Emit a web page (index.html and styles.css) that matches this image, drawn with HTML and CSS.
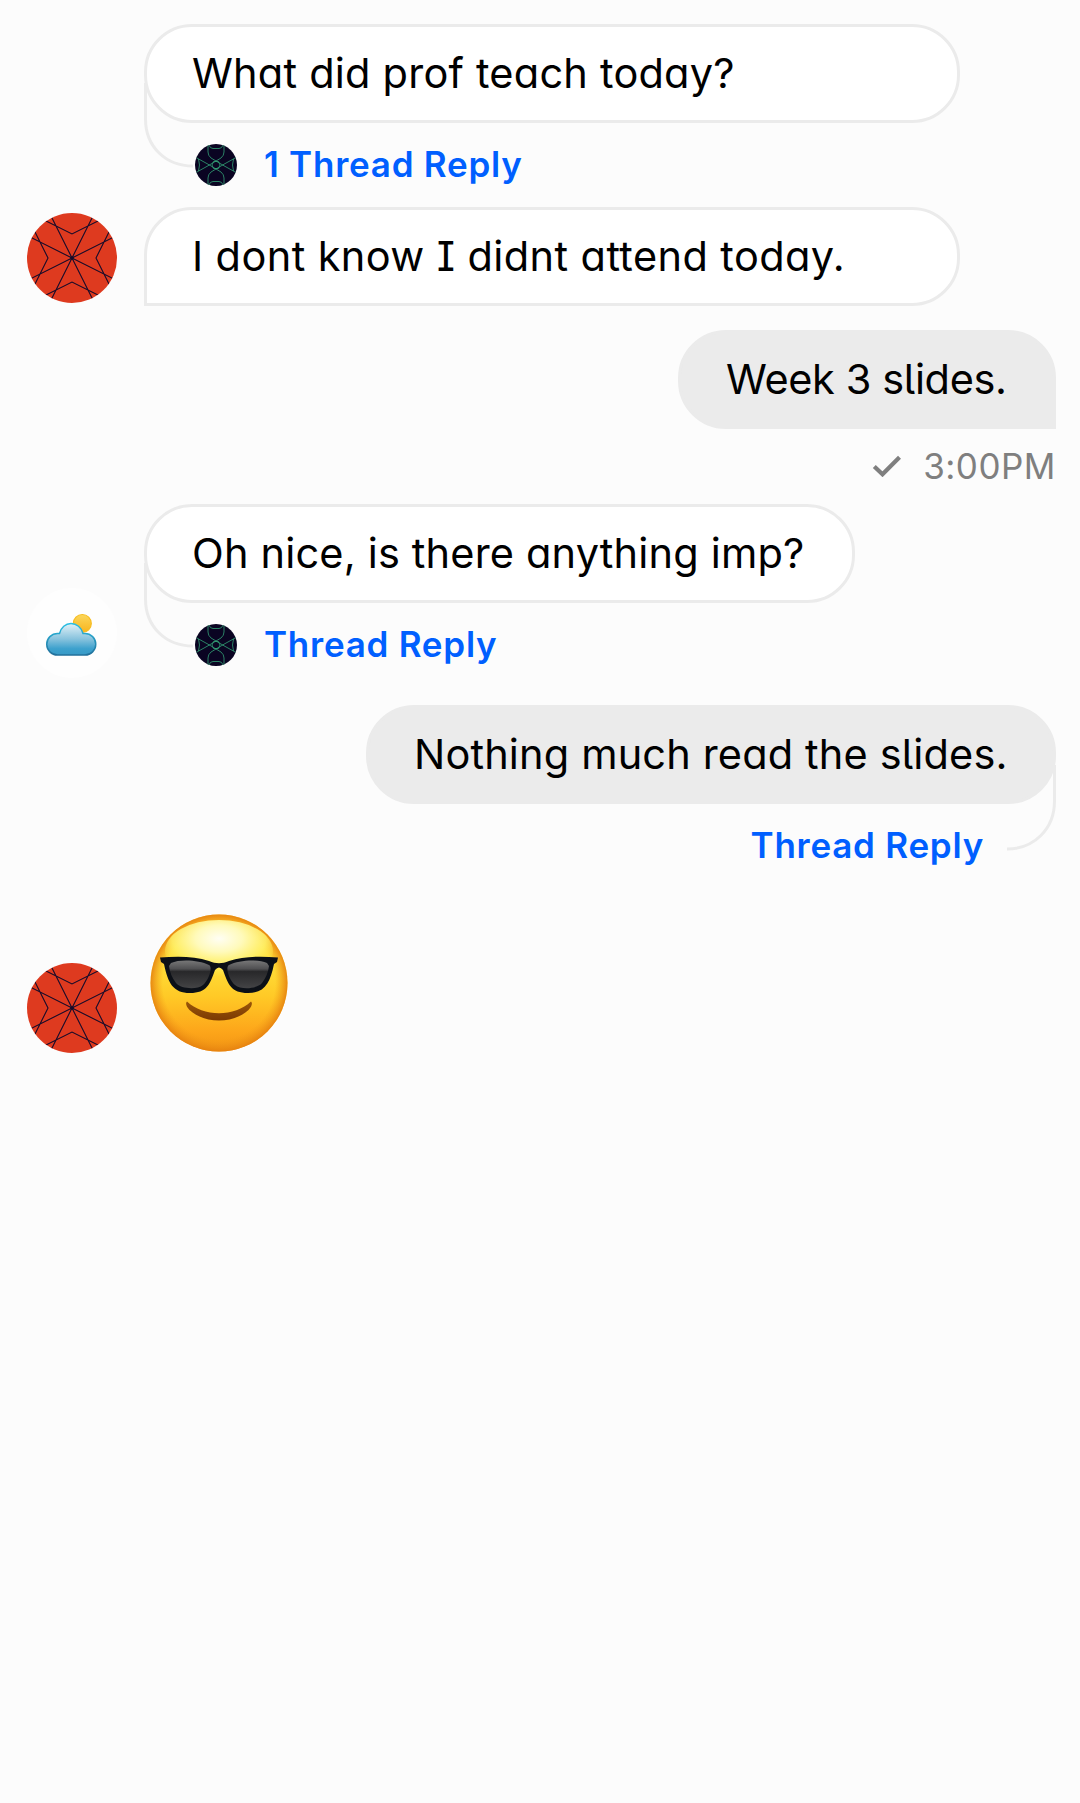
FILE: index.html
```html
<!DOCTYPE html>
<html lang="en">
<head>
<meta charset="utf-8">
<title>Chat</title>
<link rel="stylesheet" href="styles.css">
</head>
<body>
<svg class="defs" width="0" height="0" aria-hidden="true">
  <defs>
    <clipPath id="round90"><circle cx="45" cy="45" r="45"/></clipPath>
    <clipPath id="round42"><circle cx="21" cy="21" r="21"/></clipPath>
    <linearGradient id="cloud" x1="0" y1="0" x2="0" y2="1"><stop offset="0" stop-color="#e3f2f8"/><stop offset=".5" stop-color="#86c2dd"/><stop offset=".8" stop-color="#3da1cd"/><stop offset="1" stop-color="#3799c6"/></linearGradient>
    <linearGradient id="cloudEdge" x1="0" y1="0" x2="0" y2="1"><stop offset="0" stop-color="#2bc0e4"/><stop offset="1" stop-color="#22709b"/></linearGradient>
    <linearGradient id="sun" x1="0" y1="0" x2="0" y2="1"><stop offset="0" stop-color="#fbd75c"/><stop offset="1" stop-color="#f9b41c"/></linearGradient>
    <symbol id="avatar-red" viewBox="0 0 90 90">
      <g clip-path="url(#round90)">
        <rect width="90" height="90" fill="#de3a1f"/>
        <path d="M22.5 0L67.500 90M67.500 0L22.500 90M0 22.500L90 67.500M0 67.500L90 22.500M0-1.500L45 21L90-1.500M0 91.500L45 69L90 91.500M-1.500 0L21 45L-1.500 90M91.500 0L69 45L91.500 90" fill="none" stroke="#160b2a" stroke-width="1.100"/>
        <circle cx="45" cy="45" r="1.800" fill="#160b2a"/>
      </g>
    </symbol>
    <symbol id="avatar-dark" viewBox="0 0 42 42">
      <g clip-path="url(#round42)">
        <rect width="42" height="42" fill="#0a0422"/>
        <path d="M13 0V8Q13 11.500 16 14L29 21.800L41 28.500M29 0V8Q29 11.500 26 14L13 21.800L1 28.500M13 42V34Q13 30.500 16 28L29 20.200L41 13.500M29 42V34Q29 30.500 26 28L13 20.200L1 13.500M14 1Q15 4.500 18 4.500H24Q27 4.500 28 1M14 41Q15 37.500 18 37.500H24Q27 37.500 28 41M3.500 15Q5.500 21 3.500 27M38.500 15Q36.500 21 38.500 27M18.500 17.500H23.500L25 21L23.500 24.500H18.500L17 21Z" fill="none" stroke="#34a176" stroke-width=".8"/>
      </g>
    </symbol>
  </defs>
</svg>
<main class="chat">
  <section class="message received first">
    <div class="bubble wide"><span class="t1">What did prof teach today?</span></div>
    <div class="thread"><svg class="mini"><use href="#avatar-dark"/></svg><span class="reply count">1 Thread Reply</span></div>
    <svg class="link link-left" viewBox="0 0 50 86"><path d="M1.500 0V36C1.500 64 22 83 49 83" /></svg>
  </section>
  <section class="message received second">
    <svg class="avatar"><use href="#avatar-red"/></svg>
    <div class="bubble wide tail"><span class="t2">I dont know <span class="serif-i">I</span> didnt attend today.</span></div>
  </section>
  <section class="message sent third">
    <div class="bubble tail short"><span class="t3">Week 3 slides.</span></div>
    <div class="status"><svg class="check" viewBox="0 0 30 22"><path d="M2.300 11.500L10.500 19.300L27.500 2.300"/></svg><time>3:00PM</time></div>
  </section>
  <section class="message received fourth">
    <svg class="avatar" viewBox="0 0 90 90">
      <circle cx="45" cy="45" r="45" fill="#fefefe"/>
      <circle cx="55.300" cy="35.500" r="9" fill="url(#sun)" stroke="#f7bd20" stroke-width="1.200"/>
      <path d="M30.500 67A10.750 10.750 0 0 1 30.500 45.500H32.500C34 39.500 38.500 35.500 44 35.500S54.500 39.500 56 45.500H58A10.750 10.750 0 0 1 58 67Z" fill="url(#cloud)" stroke="url(#cloudEdge)" stroke-width="1.500"/>
    </svg>
    <div class="bubble medium"><span class="t4">Oh nice, is there anything imp?</span></div>
    <div class="thread"><svg class="mini"><use href="#avatar-dark"/></svg><span class="reply">Thread Reply</span></div>
    <svg class="link link-left" viewBox="0 0 50 86"><path d="M1.500 0V36C1.500 64 22 83 49 83" /></svg>
  </section>
  <section class="message sent fifth">
    <div class="bubble long"><span class="t5">Nothing much read the slides.</span></div>
    <div class="thread"><span class="reply">Thread Reply</span></div>
    <svg class="link link-right" viewBox="0 0 50 86"><path d="M48.500 0V36C48.500 64 28 84 1 84" /></svg>
  </section>
  <section class="message received sixth">
    <svg class="avatar"><use href="#avatar-red"/></svg>
    <svg class="emoji" viewBox="0 0 140 140">
      <defs>
        <linearGradient id="face" x1="0" y1="0" x2="0" y2="1"><stop offset="0" stop-color="#ffc22a"/><stop offset=".35" stop-color="#ffe03a"/><stop offset=".6" stop-color="#ffc926"/><stop offset=".85" stop-color="#fda61a"/><stop offset="1" stop-color="#f39413"/></linearGradient>
        <radialGradient id="rim"><stop offset=".82" stop-color="#f09a18" stop-opacity="0"/><stop offset="1" stop-color="#e5800f" stop-opacity=".9"/></radialGradient>
        <radialGradient id="shine" cx=".5" cy=".3" r=".62"><stop offset="0" stop-color="#fffef4"/><stop offset=".35" stop-color="#fffabb"/><stop offset=".7" stop-color="#fff26a" stop-opacity=".85"/><stop offset="1" stop-color="#ffe843" stop-opacity="0"/></radialGradient>
        <linearGradient id="lens" x1="0" y1="0" x2="0" y2="1"><stop offset="0" stop-color="#777"/><stop offset=".3" stop-color="#505052"/><stop offset=".4" stop-color="#28282a"/><stop offset="1" stop-color="#434345"/></linearGradient>
        <linearGradient id="smile" x1="0" y1="0" x2="0" y2="1"><stop offset="0" stop-color="#9a5608"/><stop offset="1" stop-color="#7c3a03"/></linearGradient>
      </defs>
      <circle cx="70" cy="70" r="68.500" fill="url(#face)"/>
      <circle cx="70" cy="70" r="68.500" fill="url(#rim)"/>
      <ellipse cx="70" cy="38" rx="54" ry="31" fill="url(#shine)"/>
      <path d="M11 44.500C28 43 46 43 60 48C67 51 73 51 80 48C94 43 112 43 129 44.500L128 49L125 51C121 70 116 80 99 80C82 80 79 71 74 57Q70 52 66 57C61 71 58 80 41 80C24 80 19 70 15 51L12 49Z" fill="#0c1017"/>
      <path d="M22 50C31 46 50 47 60 52C64 54 60 67 54 72C48 77 32 76 27 70Q21 62 20 53ZM118 50C109 46 90 47 80 52C76 54 80 67 86 72C92 77 108 76 113 70Q119 62 120 53Z" fill="url(#lens)"/>
      <path d="M38 88.500C54 104 86 104 102 88.500C104 90 102.500 94 99.500 97C84 111 56 111 40.500 97C37.500 94 36 90 38 88.500Z" fill="url(#smile)"/>
    </svg>
  </section>
</main>
</body>
</html>
```
FILE: styles.css
```css
* { box-sizing: border-box; }
body { margin: 0; background: #fcfcfc; }
.defs { display: block; }
.chat {
  display: flex;
  flex-direction: column;
  min-height: 1803px;
  padding: 24px 24px 0 27px;
  font-family: Inter, "Liberation Sans", sans-serif;
}
.message { display: grid; position: relative; align-content: start; }
.received { grid-template-columns: 90px max-content; column-gap: 27px; justify-items: start; }
.sent { grid-template-columns: max-content; justify-content: end; justify-items: end; }
.received .bubble, .received .thread { grid-column: 2; }
.received .bubble { grid-row: 1; }
.first { height: 183px; }
.second { height: 123px; }
.third { height: 174px; }
.fourth { height: 201px; }
.fifth { height: 208px; }
.bubble {
  display: flex;
  align-items: center;
  height: 99px;
  padding: 0 45px 1px;
  border: 3px solid #ebebeb;
  border-radius: 48px;
  background: #fff;
  color: #000;
  font-size: 41.500px;
  line-height: 51px;
  white-space: nowrap;
  font-feature-settings: "cv11", "cv05";
}
.sent .bubble { background: #ebebeb; }
.received .tail { border-bottom-left-radius: 0; }
.sent .tail { border-bottom-right-radius: 0; }
.wide { width: 816px; }
.medium { width: 711px; }
.short { width: 378px; }
.long { width: 690px; }
.t1 { letter-spacing: .22px; }
.t2 { letter-spacing: .4px; }
.t3 { letter-spacing: -.37px; }
.t4 { letter-spacing: .18px; }
.t5 { letter-spacing: .15px; }
.serif-i { font-feature-settings: "cv08"; }
.avatar { display: block; width: 90px; height: 90px; grid-column: 1; grid-row: 1; margin-top: 6px; }
.fourth .avatar { grid-row: 1 / span 2; margin-top: 84px; }
.fourth, .first { grid-template-rows: 99px 84px; }
.thread { display: flex; align-items: center; height: 84px; gap: 27px; padding-left: 51px; }
.sent .thread { padding: 0 72px 0 0; }
.mini { display: block; width: 42px; height: 42px; }
.reply { padding-bottom: 2px; color: #005fff; font-size: 35px; font-weight: 600; line-height: 42px; letter-spacing: .75px; white-space: nowrap; }
.link { position: absolute; width: 50px; height: 86px; fill: none; stroke: #ebebeb; stroke-width: 3; }
.link-left { left: 117px; top: 59px; }
.link-right { right: 0; top: 60px; }
.status { display: flex; align-items: center; gap: 21px; height: 73px; color: #7f7f7f; font-size: 35px; line-height: 42px; letter-spacing: .5px; }
.check { width: 30px; height: 22px; fill: none; stroke: #7f7f7f; stroke-width: 4.200; }
.sixth .avatar { margin-top: 50px; }
.emoji { grid-column: 2; grid-row: 1; width: 140px; height: 140px; margin-left: 5px; }
```
